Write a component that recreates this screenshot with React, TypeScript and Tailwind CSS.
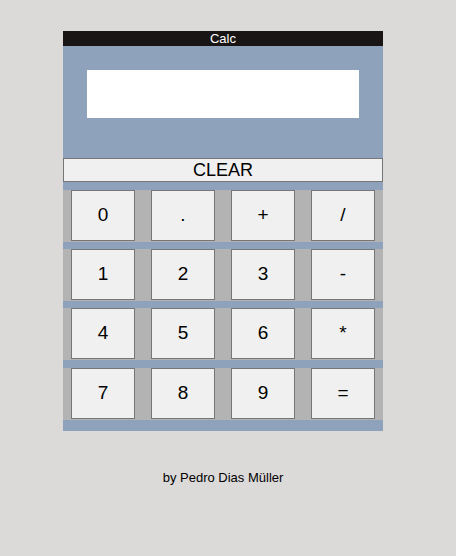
import React, { useState } from "react";

const rows = [
  ["0", ".", "+", "/"],
  ["1", "2", "3", "-"],
  ["4", "5", "6", "*"],
  ["7", "8", "9", "="],
];

const App = () => {
  const [display, setDisplay] = useState("");

  const press = (key: string) => {
    if (key === "=") {
      try {
        // eslint-disable-next-line no-new-func
        setDisplay(String(Function(`return (${display})`)()));
      } catch {
        setDisplay("Error");
      }
      return;
    }
    setDisplay((d) => d + key);
  };

  return (
    <div className="min-h-[556px] w-full bg-[#dcd9d9] pt-[31px] font-['Liberation_Sans',Arial,sans-serif]">
      <div className="ml-[63px] w-[320px] bg-[#8ea3bb]">
        {/* Title bar */}
        <div className="h-[15px] bg-[#1a1515] text-center text-[13px] leading-[15px] text-white">
          Calc
        </div>

        {/* Display */}
        <div className="px-[24px] pt-[24px] pb-[40px]">
          <input
            readOnly
            value={display}
            className="block h-[48px] w-full bg-white px-2 text-right text-[22px] text-black outline-none"
          />
        </div>

        <button
          onClick={() => setDisplay("")}
          className="block h-[24px] w-full border border-[#767676] bg-[#f0f0f0] text-[18px] leading-[20px] text-black"
        >
          CLEAR
        </button>

        {/* Keypad */}
        <div className="flex flex-col gap-[7px] pt-[8px] pb-[11px]">
          {rows.map((row, i) => (
            <div
              key={i}
              className={[
                "flex h-[52px] items-start justify-between bg-[#b3b3b3] px-[8px]",
                i === 3 ? "mt-px" : "",
              ].join(" ")}
            >
              {row.map((key) => (
                <button
                  key={key}
                  onClick={() => press(key)}
                  className="h-[51px] w-[64px] border border-[#767676] bg-[#f0f0f0] text-[19px] text-black"
                >
                  {key}
                </button>
              ))}
            </div>
          ))}
        </div>
      </div>

      <p className="mt-[39px] ml-[63px] w-[320px] text-center text-[13px] leading-[15px] text-black">
        by Pedro Dias Müller
      </p>
    </div>
  );
};

export default App;
